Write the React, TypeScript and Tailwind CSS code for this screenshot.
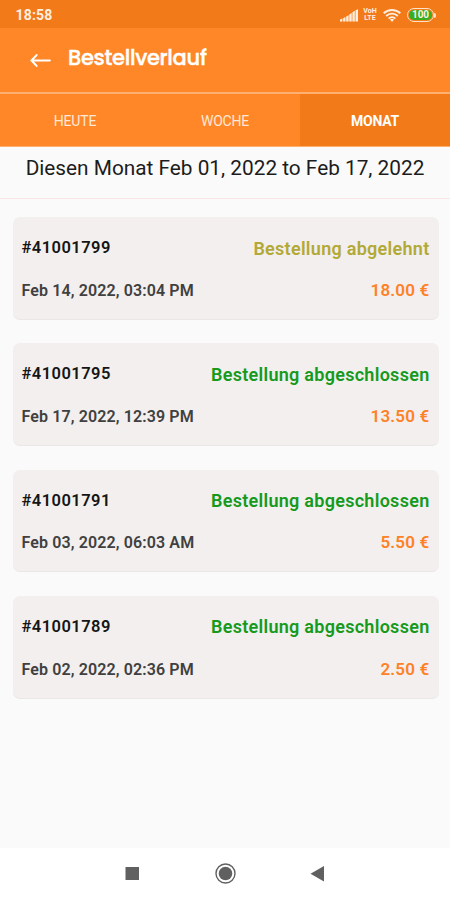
interface Order {
  id: string;
  date: string;
  status: "rejected" | "completed";
  price: string;
}

const orders: Order[] = [
  { id: "41001799", date: "Feb 14, 2022, 03:04 PM", status: "rejected", price: "18.00 €" },
  { id: "41001795", date: "Feb 17, 2022, 12:39 PM", status: "completed", price: "13.50 €" },
  { id: "41001791", date: "Feb 03, 2022, 06:03 AM", status: "completed", price: "5.50 €" },
  { id: "41001789", date: "Feb 02, 2022, 02:36 PM", status: "completed", price: "2.50 €" },
];

const tabs = ["HEUTE", "WOCHE", "MONAT"];

function StatusBar() {
  return (
    <div className="flex h-7 items-center justify-between bg-[#f27a18] pt-0.5 pr-[14px] pl-[15.5px] text-[#fff0e2]">
      <span className="text-[14px] font-bold tracking-[0.2px]">18:58</span>
      <div className="flex items-center">
        <svg width="18" height="13" viewBox="0 0 18 13" fill="currentColor" className="mr-[5px]">
          <path d="M0 12.5v-2l2.4-1v3zM3.1 12.5V9.3l2.4-1.2v4.4zM6.2 12.5v-5l2.4-1.3v6.3zM9.3 12.5v-7l2.4-1.4v8.4zM12.4 12.5V3.3l2.4-1.6v10.8zM15.5 12.5V1.3L18 .2v12.3z" />
        </svg>
        <div className="mr-[6px] flex h-[14px] w-[14px] flex-col items-center justify-between text-[7px] leading-[7px] font-bold">
          <span className="h-[7px] overflow-hidden">VoH</span>
          <span className="h-[7px] overflow-hidden">LTE</span>
        </div>
        <svg width="18" height="13" viewBox="0 0 18 13" fill="none" stroke="currentColor" strokeWidth="1.9" className="mr-[6px]">
          <path d="M.7 4.3a12 12 0 0 1 16.6 0M3.2 7a8.3 8.3 0 0 1 11.6 0M5.7 9.6a4.8 4.8 0 0 1 6.6 0" />
          <path d="M9 13L7 10.6a3 3 0 0 1 4 0z" fill="currentColor" stroke="none" />
        </svg>
        <div className="flex h-[14px] w-[27px] items-center justify-center rounded-full border-[1.5px] border-[#ffe3c8] p-px">
          <span className="flex h-full w-full items-center justify-center rounded-full bg-[#3aac20] text-[10px] leading-none font-bold">
            100
          </span>
        </div>
        <span className="h-[5px] w-[2px] rounded-r-full bg-[#ffe3c8]" />
      </div>
    </div>
  );
}

function Header() {
  return (
    <header className="flex h-16 items-center pl-[30px] text-white">
      <svg width="21" height="15" viewBox="0 0 21 15" fill="none" stroke="currentColor" strokeWidth="2.1" strokeLinecap="round">
        <path d="M19.8 7.5H1.5M6.6 2.1L1.5 7.5l5.1 5.4" />
      </svg>
      <h1 className="-mt-[5px] ml-[17px] font-['Poppins','Inter',sans-serif] text-[21px] font-medium tracking-[-0.3px] [-webkit-text-stroke:0.4px_white]">
        Bestellverlauf
      </h1>
    </header>
  );
}

function OrderCard({ order }: { order: Order }) {
  const rejected = order.status === "rejected";

  return (
    <li className="flex h-[102.7px] flex-col justify-between rounded-[7px] border-b border-[#eae7e6] bg-[#f2efee] pt-[19px] pr-[9px] pb-[16px] pl-[9px]">
      <div className="flex items-center justify-between">
        <span className="text-[16.5px] leading-6 font-semibold tracking-[0.45px] text-[#151515]">#{order.id}</span>
        <span
          className={`relative top-[0.5px] text-[18px] leading-6 font-semibold tracking-[0.28px] ${rejected ? "text-[#b3a936]" : "text-[#159a1d]"}`}
        >
          {rejected ? "Bestellung abgelehnt" : "Bestellung abgeschlossen"}
        </span>
      </div>
      <div className="flex items-center justify-between leading-6 font-semibold">
        <span className="text-[16px] tracking-[0.12px] text-[#404040]">{order.date}</span>
        <span className="-mt-[2px] text-[17px] tracking-[0.2px] text-[#ff8126]">{order.price}</span>
      </div>
    </li>
  );
}

function NavBar() {
  return (
    <nav className="h-[52px] bg-white">
      <svg width="450" height="52" viewBox="0 0 450 52" fill="#606060">
        <rect x="125.5" y="19" width="13.5" height="13" />
        <circle cx="225.5" cy="25.5" r="9.5" fill="none" stroke="#606060" strokeWidth="1.4" />
        <circle cx="225.5" cy="25.5" r="6.8" />
        <path d="M310.5 25.7L324 18v15.4z" />
      </svg>
    </nav>
  );
}

export default function App() {
  return (
    <div className="flex h-[900px] w-[450px] flex-col overflow-hidden bg-[#fafafa] font-[Roboto,sans-serif]">
      <StatusBar />
      <div className="bg-[#ff8728]">
        <Header />
        <div className="flex h-[55px] border-t-2 border-b border-t-[#ffb070] border-b-[#ffb070] text-[14px] tracking-[-0.2px]">
          {tabs.map((tab) => (
            <button
              key={tab}
              className={`flex-1 pt-[3px] ${tab === "MONAT" ? "bg-[#f27a18] font-bold text-white" : "text-[#ffe9d6]"}`}
            >
              {tab}
            </button>
          ))}
        </div>
      </div>
      <p className="h-[52px] border-b border-[#fbe6e6] pt-[6px] text-center text-[20.8px] leading-[30px] whitespace-nowrap text-[#1c1c1c]">
        Diesen Monat Feb 01, 2022 to Feb 17, 2022
      </p>
      <ul className="flex flex-1 flex-col gap-[23.6px] pt-[18px] pr-[11.5px] pl-[12.5px]">
        {orders.map((order) => (
          <OrderCard key={order.id} order={order} />
        ))}
      </ul>
      <NavBar />
    </div>
  );
}
